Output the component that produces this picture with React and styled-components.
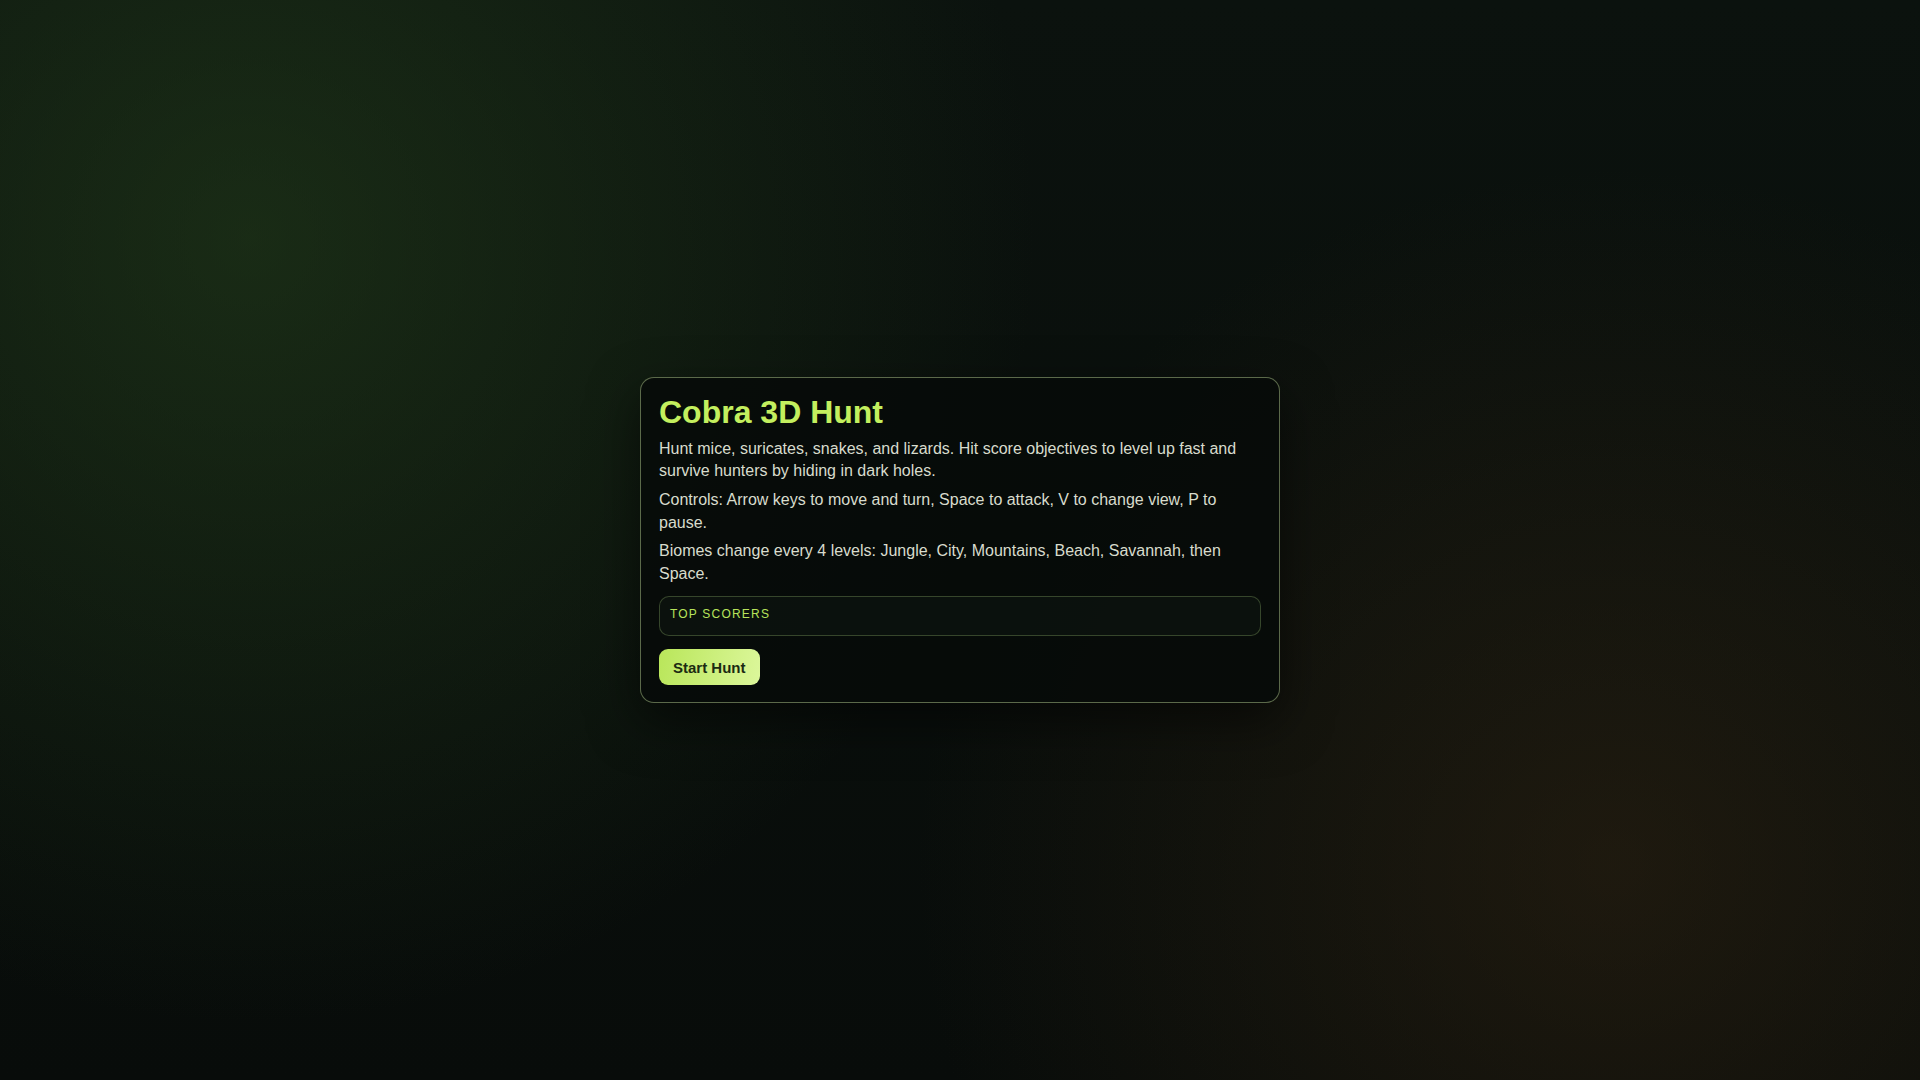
import React from "react";
import styled, { createGlobalStyle } from "styled-components";

const GlobalStyle = createGlobalStyle`
  * {
    box-sizing: border-box;
  }

  html,
  body {
    margin: 0;
    height: 100%;
  }

  body {
    font-family: "Liberation Sans", Arial, Helvetica, sans-serif;
    background-color: #090d0b;
    background-image:
      radial-gradient(circle at 13% 22%, rgba(40, 70, 30, 0.5), transparent 42%),
      radial-gradient(circle at 84% 80%, rgba(60, 42, 20, 0.42), transparent 38%),
      linear-gradient(180deg, #0b120e 0%, #080c0a 100%);
    color: #d8dccd;
  }

  #root {
    height: 100%;
  }
`;

const Screen = styled.main`
  height: 100%;
  display: flex;
  align-items: center;
  justify-content: center;
`;

const Panel = styled.section`
  width: 640px;
  padding: 18px 18px 17px;
  display: flex;
  flex-direction: column;
  align-items: flex-start;
  background: rgba(7, 11, 9, 0.92);
  border: 1px solid rgba(175, 200, 140, 0.5);
  border-radius: 14px;
  box-shadow: 0 18px 50px rgba(0, 0, 0, 0.55);
`;

const Title = styled.h1`
  margin: 0 0 10px;
  font-size: 32px;
  line-height: 1;
  font-weight: 700;
  color: #c3ef5e;
`;

const Text = styled.p`
  margin: 0 0 6.5px;
  font-size: 16px;
  line-height: 1.4;
  color: #d8dccd;
`;

const Scores = styled.div`
  align-self: stretch;
  margin-top: 4.5px;
  min-height: 40px;
  padding: 10px 10px 14px;
  background: rgba(20, 30, 22, 0.35);
  border: 1px solid rgba(120, 150, 90, 0.4);
  border-radius: 10px;
`;

const ScoresLabel = styled.div`
  font-size: 12px;
  line-height: 14px;
  letter-spacing: 0.1em;
  text-transform: uppercase;
  color: #b7e35b;
`;

const HuntButton = styled.button`
  margin-top: 13px;
  height: 36px;
  padding: 0 14px;
  border: none;
  border-radius: 9px;
  background: linear-gradient(100deg, #b9e65a 0%, #dcf79b 100%);
  color: #1b2a12;
  font-family: inherit;
  font-size: 15px;
  font-weight: 700;
  cursor: pointer;
`;

export default function App() {
  return (
    <>
      <GlobalStyle />
      <Screen>
        <Panel>
          <Title>Cobra 3D Hunt</Title>
          <Text>
            Hunt mice, suricates, snakes, and lizards. Hit score objectives to
            level up fast and survive hunters by hiding in dark holes.
          </Text>
          <Text>
            Controls: Arrow keys to move and turn, Space to attack, V to change
            view, P to pause.
          </Text>
          <Text>
            Biomes change every 4 levels: Jungle, City, Mountains, Beach,
            Savannah, then Space.
          </Text>
          <Scores>
            <ScoresLabel>Top Scorers</ScoresLabel>
          </Scores>
          <HuntButton>Start Hunt</HuntButton>
        </Panel>
      </Screen>
    </>
  );
}
